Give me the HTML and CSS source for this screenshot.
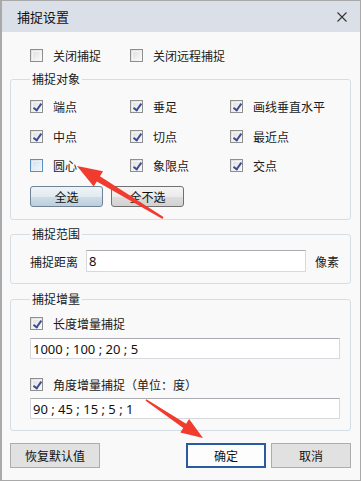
FILE: index.html
```html
<!DOCTYPE html>
<html lang="zh-CN">
<head>
  <meta charset="UTF-8">
  <meta name="viewport" content="width=device-width, initial-scale=1.0">
  <title>捕捉设置</title>
  <link rel="stylesheet" href="styles.css">
</head>
<body>

<div class="dialog">
  <div class="titlebar">
    <span class="title">捕捉设置</span>
    <svg class="close" width="10" height="10" viewBox="0 0 10 10">
      <path d="M0.5 0.5 L9.5 9.5 M9.5 0.5 L0.5 9.5" stroke="#333" stroke-width="1.1" fill="none"/>
    </svg>
  </div>

  <div class="content">
    <div class="top-row">
      <label class="check"><span class="box"></span>关闭捕捉</label>
      <label class="check"><span class="box"></span>关闭远程捕捉</label>
    </div>

    <fieldset class="group group-objects">
      <legend>捕捉对象</legend>
      <div class="check-grid">
        <label class="check"><span class="box checked"></span>端点</label>
        <label class="check"><span class="box checked"></span>垂足</label>
        <label class="check"><span class="box checked"></span>画线垂直水平</label>
        <label class="check"><span class="box checked"></span>中点</label>
        <label class="check"><span class="box checked"></span>切点</label>
        <label class="check"><span class="box checked"></span>最近点</label>
        <label class="check"><span class="box hover"></span>圆心</label>
        <label class="check"><span class="box checked"></span>象限点</label>
        <label class="check"><span class="box checked"></span>交点</label>
      </div>
      <div class="select-buttons">
        <button class="btn-small btn-active">全选</button>
        <button class="btn-small">全不选</button>
      </div>
    </fieldset>

    <fieldset class="group group-range">
      <legend>捕捉范围</legend>
      <div class="range-row">
        <span class="range-label">捕捉距离</span>
        <input class="field field-range" type="text" value="8">
        <span class="unit">像素</span>
      </div>
    </fieldset>

    <fieldset class="group group-step">
      <legend>捕捉增量</legend>
      <label class="check"><span class="box checked"></span>长度增量捕捉</label>
      <input class="field field-wide field-first" type="text" value="1000 ; 100 ; 20 ; 5">
      <label class="check check-second"><span class="box checked"></span>角度增量捕捉（单位：度）</label>
      <input class="field field-wide field-second" type="text" value="90 ; 45 ; 15 ; 5 ; 1">
    </fieldset>

    <div class="footer">
      <button class="btn btn-reset">恢复默认值</button>
      <div class="footer-right">
        <button class="btn btn-ok">确定</button>
        <button class="btn">取消</button>
      </div>
    </div>
  </div>

  <!-- red arrows drawn over the screenshot -->
  <svg class="arrows" width="361" height="481" viewBox="0 0 361 481">
    <polygon fill="#f23b2f" points="77,166 103.1,171.2 99.9,176.3 163.5,217.1 162.5,218.9 96.8,181.5 93.7,186.6"/>
    <polygon fill="#f23b2f" points="203,438 189.1,419.1 186.1,423.7 146.4,399.3 145.6,400.7 183.3,427.9 180.3,432.5"/>
  </svg>
</div>

</body>
</html>
```

FILE: styles.css
```css
body {
  margin: 0;
  font-family: "Noto Sans CJK SC", "Noto Sans", sans-serif;
  font-size: 12px;
  color: #1a1a1a;
}
.dialog {
  position: relative;
  width: 361px;
  height: 481px;
  box-sizing: border-box;
  border: 1px solid #a9a9a9;
  border-left-width: 2px;
  background-color: #f9f9fa;
  overflow: hidden;
}
.titlebar {
  height: 31px;
  background-color: #dbdfe8;
  display: flex;
  align-items: center;
  justify-content: space-between;
  padding: 0 13px 0 15px;
}
.title {
  font-size: 13px;
  color: #111;
}
.close {
  display: block;
  margin-top: 1px;
}
.content {
  padding: 0 8px;
}
.top-row {
  display: flex;
  margin-top: 17px;
  padding-left: 20px;
  height: 13px;
}
.top-row .check {
  width: 100px;
}
.check {
  display: flex;
  align-items: center;
  height: 13px;
  line-height: 13px;
  white-space: nowrap;
}
.box {
  position: relative;
  width: 13px;
  height: 13px;
  box-sizing: border-box;
  border: 1px solid #8f8f8f;
  background: linear-gradient(135deg, #dcdcdc, #fbfbfb);
  margin-right: 10px;
  flex: none;
}
.box::before {
  content: "";
  position: absolute;
  left: 1px;
  top: 1px;
  right: 1px;
  bottom: 1px;
  background: linear-gradient(135deg, #e2e2e2, #f6f6f6);
  border: 1px solid #f4f4f4;
  box-sizing: border-box;
}
.box.checked::after {
  content: "";
  position: absolute;
  left: 4px;
  top: 1px;
  width: 3px;
  height: 7px;
  border-right: 2px solid #3d4d94;
  border-bottom: 2px solid #3d4d94;
  transform: rotate(35deg);
}
.box.hover {
  border-color: #5a8fc0;
}
.box.hover::before {
  background: linear-gradient(135deg, #cfe4f5, #eef6fc);
  border-color: #e3f0fa;
}
.group {
  margin: 0;
  width: 341px;
  box-sizing: border-box;
  border: 1px solid #d5dee4;
  border-radius: 3px;
  padding: 0 10px 0 19px;
}
.group legend {
  padding: 0 2px;
  line-height: 14px;
  font-size: 12px;
}
.group-objects {
  margin-top: 10px;
  padding-top: 14px;
  padding-bottom: 12px;
}
.check-grid {
  display: grid;
  grid-template-columns: 100px 100px 100px;
  grid-auto-rows: 13px;
  row-gap: 16.5px;
}
.select-buttons {
  display: flex;
  gap: 8px;
  margin-top: 14px;
}
.btn-small {
  width: 73px;
  height: 21px;
  font-family: inherit;
  font-size: 12px;
  color: #111;
  border: 1px solid #707070;
  border-radius: 3px;
  background: linear-gradient(#f4f4f4 0%, #ebebeb 50%, #dddddd 51%, #d2d2d2 100%);
  padding: 0;
}
.btn-small.btn-active {
  border-color: #6f8296;
  background: linear-gradient(#eef3f7 0%, #e2ebf1 50%, #cfdee8 51%, #bccfdc 100%);
}
.group-range {
  margin-top: 7px;
  padding-top: 9px;
  padding-bottom: 11px;
}
.range-row {
  display: flex;
  align-items: center;
}
.range-label {
  width: 48px;
  margin-right: 8px;
}
.unit {
  margin-left: 9px;
}
.field {
  height: 22px;
  box-sizing: border-box;
  border: 1px solid #d6d9de;
  border-top-color: #abadb3;
  background: #fff;
  font-family: "Noto Sans", sans-serif;
  font-size: 13px;
  color: #111;
  padding: 0 2px;
  margin: 0;
  outline: none;
}
.field-range {
  width: 220px;
}
.field-wide {
  display: block;
  width: 310px;
  height: 21px;
}
.group-step {
  margin-top: 8px;
  padding-top: 11px;
  padding-bottom: 11px;
}
.field-first {
  margin-top: 8px;
}
.check-second {
  margin-top: 19px;
}
.field-second {
  margin-top: 7px;
}
.footer {
  display: flex;
  justify-content: space-between;
  margin-top: 12px;
  width: 341px;
}
.footer-right {
  display: flex;
  gap: 5px;
}
.btn {
  width: 80px;
  height: 25px;
  font-family: inherit;
  font-size: 12px;
  color: #111;
  border: 1px solid #adadad;
  background: #e1e1e1;
  padding: 0;
}
.btn-reset {
  width: 90px;
}
.btn-ok {
  border: 2px solid #2a5aa0;
  background: #fdfdfd;
}
.arrows {
  position: absolute;
  left: -2px;
  top: -1px;
  pointer-events: none;
}
```
